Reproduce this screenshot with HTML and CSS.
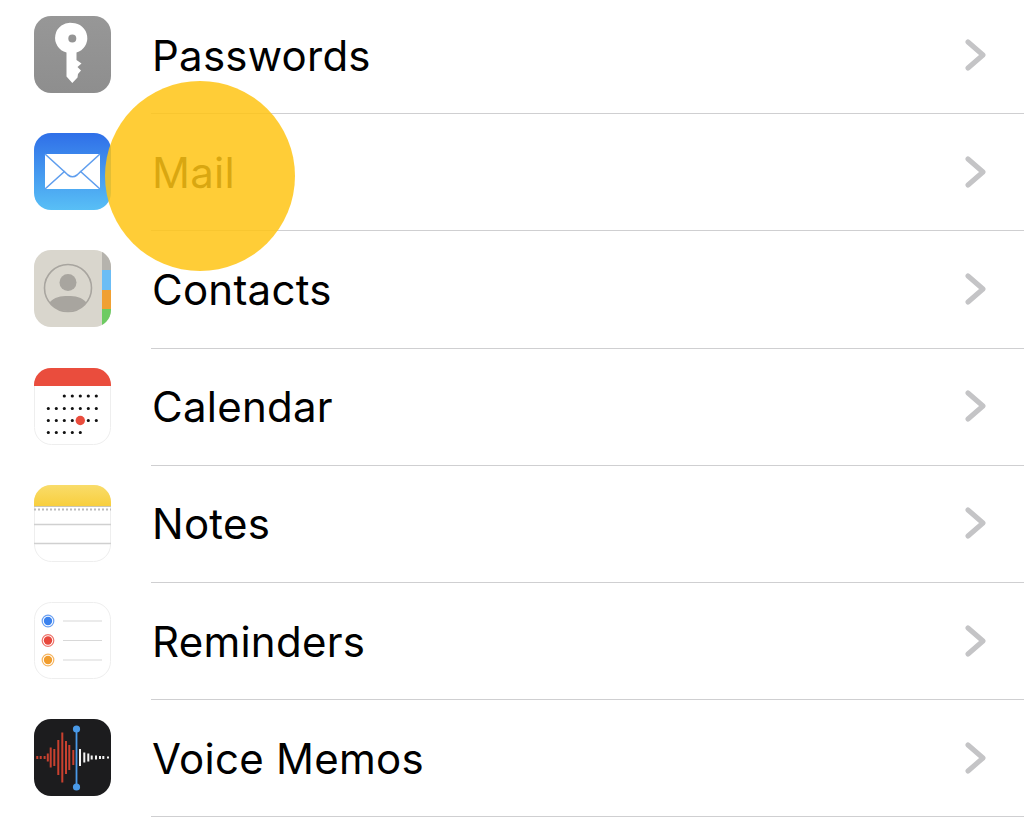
FILE: index.html
```html
<!DOCTYPE html>
<html lang="en">
<head>
<meta charset="utf-8">
<title>Settings</title>
<link rel="stylesheet" href="styles.css">
</head>
<body>
<ul class="list">
  <li class="row">
    <svg class="icon" viewBox="0 0 77 77"><defs><linearGradient id="gk" x1="0" y1="0" x2="0" y2="1"><stop offset="0" stop-color="#979797"/><stop offset="1" stop-color="#8e8e8e"/></linearGradient></defs>
      <rect width="77" height="77" rx="17" fill="url(#gk)"/>
      <path fill-rule="evenodd" fill="#fff" d="M38.300 7a15 15 0 0 1 4.200 29.400V44l5 3.500-4 3.500 3.500 3.500-3 3.500-.5 3.500-5.200 5.500-5.800-6.500V36.400A15 15 0 0 1 38.300 7zm0 11.500a4 4 0 1 0 0 8 4 4 0 0 0 0-8z"/>
    </svg>
    <div class="body"><span class="label">Passwords</span><svg class="chev" viewBox="0 0 22 32"><path d="M3 3l15 13L3 29"/></svg></div>
  </li>
  <li class="row">
    <svg class="icon" viewBox="0 0 77 77"><defs><linearGradient id="gm" x1="0" y1="0" x2="0" y2="1"><stop offset="0" stop-color="#2f6fe8"/><stop offset="1" stop-color="#58bff6"/></linearGradient></defs>
      <rect width="77" height="77" rx="17" fill="url(#gm)"/>
      <rect x="11" y="21" width="55" height="35" rx="1.500" fill="#fff"/>
      <path d="M11 21l23 21q4.500 3.500 9 0l23-21M11 56l20-18M66 56L46 38" fill="none" stroke="#5f9eee" stroke-width="1.600"/>
    </svg>
    <div class="body"><span class="label">Mail</span><svg class="chev" viewBox="0 0 22 32"><path d="M3 3l15 13L3 29"/></svg></div>
  </li>
  <li class="row">
    <svg class="icon" viewBox="0 0 77 77"><defs><clipPath id="cc"><rect width="77" height="77" rx="17"/></clipPath></defs>
      <g clip-path="url(#cc)">
        <rect width="77" height="77" fill="#d9d6cd"/>
        <rect x="68" width="9" height="20" fill="#b5b3ad"/>
        <rect x="68" y="20" width="9" height="20" fill="#6cbdf5"/>
        <rect x="68" y="40" width="9" height="19" fill="#f0a033"/>
        <rect x="68" y="59" width="9" height="18" fill="#6dcb62"/>
        <circle cx="34" cy="38" r="23.500" fill="none" stroke="#a8a59f" stroke-width="1.600"/>
        <circle cx="34" cy="32.500" r="8.500" fill="#a8a59f"/>
        <path d="M15.500 52.500C20 47 27 46 34 46s14 1 18.500 6.500A23 23 0 0 1 34 61a23 23 0 0 1-18.500-8.500z" fill="#a8a59f"/>
      </g>
    </svg>
    <div class="body"><span class="label">Contacts</span><svg class="chev" viewBox="0 0 22 32"><path d="M3 3l15 13L3 29"/></svg></div>
  </li>
  <li class="row">
    <svg class="icon" viewBox="0 0 77 77"><defs><clipPath id="cd"><rect width="77" height="77" rx="17"/></clipPath></defs>
      <rect x=".5" y=".5" width="76" height="76" rx="17" fill="#fff" stroke="#eeeeee"/>
      <rect width="77" height="18" fill="#ea4d3d" clip-path="url(#cd)"/>
      <path class="dots" d="M30.300 28h0M38.300 28h0M46.300 28h0M54.300 28h0M62.300 28h0M14.300 40.500h0M22.300 40.500h0M30.300 40.500h0M38.300 40.500h0M46.300 40.500h0M54.300 40.500h0M62.300 40.500h0M14.300 52.500h0M22.300 52.500h0M30.300 52.500h0M38.300 52.500h0M54.300 52.500h0M62.300 52.500h0M14.300 64.500h0M22.300 64.500h0M30.300 64.500h0M38.300 64.500h0M46.300 64.500h0"/>
      <circle cx="46.300" cy="52.500" r="4.700" fill="#ea4d3d"/>
    </svg>
    <div class="body"><span class="label">Calendar</span><svg class="chev" viewBox="0 0 22 32"><path d="M3 3l15 13L3 29"/></svg></div>
  </li>
  <li class="row">
    <svg class="icon" viewBox="0 0 77 77"><defs><clipPath id="cn"><rect width="77" height="77" rx="17"/></clipPath><linearGradient id="gn" x1="0" y1="0" x2="0" y2="1"><stop offset="0" stop-color="#f9dc6a"/><stop offset="1" stop-color="#f8cf3e"/></linearGradient></defs>
      <rect x=".5" y=".5" width="76" height="76" rx="17" fill="#fff" stroke="#eeeeee"/>
      <g clip-path="url(#cn)">
        <rect width="77" height="21" fill="url(#gn)"/>
        <rect y="21" width="77" height="1" fill="#c9c6b8"/>
        <path d="M0 24.500h77" stroke="#bbbbbb" stroke-width="1.800" stroke-dasharray="2 2"/>
        <path d="M0 39.500h77M0 58.500h77" stroke="#d0d0d0" stroke-width="1.400"/>
      </g>
    </svg>
    <div class="body"><span class="label">Notes</span><svg class="chev" viewBox="0 0 22 32"><path d="M3 3l15 13L3 29"/></svg></div>
  </li>
  <li class="row">
    <svg class="icon" viewBox="0 0 77 77">
      <rect x=".5" y=".5" width="76" height="76" rx="17" fill="#fff" stroke="#eeeeee"/>
      <circle cx="14" cy="19" r="4.200" fill="#3b82ee"/><circle cx="14" cy="19" r="5.800" fill="none" stroke="#3b82ee" stroke-opacity=".75" stroke-width="1.200"/>
      <circle cx="14" cy="38.500" r="4.200" fill="#e8483c"/><circle cx="14" cy="38.500" r="5.800" fill="none" stroke="#e8483c" stroke-opacity=".75" stroke-width="1.200"/>
      <circle cx="14" cy="58" r="4.200" fill="#f19d2e"/><circle cx="14" cy="58" r="5.800" fill="none" stroke="#f19d2e" stroke-opacity=".75" stroke-width="1.200"/>
      <path d="M29 19h39M29 38.500h39M29 58h39" stroke="#d8d8d8" stroke-width="1.200"/>
    </svg>
    <div class="body"><span class="label">Reminders</span><svg class="chev" viewBox="0 0 22 32"><path d="M3 3l15 13L3 29"/></svg></div>
  </li>
  <li class="row">
    <svg class="icon" viewBox="0 0 77 77">
      <rect width="77" height="77" rx="17" fill="#1c1c1e"/>
      <path d="M3.300 37v3M6.700 37v3M10.600 37v3M13.800 34.500v8M16.700 28.500v20M20.300 30v17M24.300 21v35M28.300 13.500v50M32 22v33M35.300 26v25M39.300 31v15" stroke="#c9412f" stroke-width="2" fill="none"/>
      <path d="M46 30v17M50.300 33.500v10M54.300 34.500v8M57.700 36.500v4M62 36.500v4M66 37v3M69.300 37v3M74 37.500v2" stroke="#f4f4f4" stroke-width="2" fill="none"/>
      <path d="M42.500 10v58" stroke="#4a9ae8" stroke-width="1.800"/>
      <circle cx="42.500" cy="10" r="3.600" fill="#4a9ae8"/><circle cx="42.500" cy="68" r="3.600" fill="#4a9ae8"/>
    </svg>
    <div class="body"><span class="label">Voice Memos</span><svg class="chev" viewBox="0 0 22 32"><path d="M3 3l15 13L3 29"/></svg></div>
  </li>
</ul>
<div class="spot" aria-hidden="true"></div>
</body>
</html>
```
FILE: styles.css
```css
html, body { margin: 0; padding: 0; height: 100%; overflow: hidden; background: #fff; }
body { position: relative; font-family: Inter, "Liberation Sans", sans-serif; color: #000; }
.list { list-style: none; margin: -4px 0 0; padding: 0 0 0 34px; }
.row { display: flex; align-items: center; height: 117.2px; gap: 40px; }
.icon { flex: none; width: 77px; height: 77px; }
.body { flex: 1; align-self: stretch; display: flex; align-items: center; justify-content: space-between; padding-right: 37px; box-shadow: 0 1px 0 #cfcfd1; }
.label { font-size: 42px; line-height: 1; padding-top: 2px; margin-left: 1px; letter-spacing: 0.25px; }
.chev { width: 22px; height: 32px; flex: none; }
.chev path { fill: none; stroke: #c4c4c6; stroke-width: 5; stroke-linecap: round; stroke-linejoin: round; }
.dots { stroke: #111; stroke-width: 3.2; stroke-linecap: round; fill: none; }
.spot { position: absolute; left: 105px; top: 81px; width: 190px; height: 190px; border-radius: 50%; background: rgba(255, 196, 20, 0.85); }
```
